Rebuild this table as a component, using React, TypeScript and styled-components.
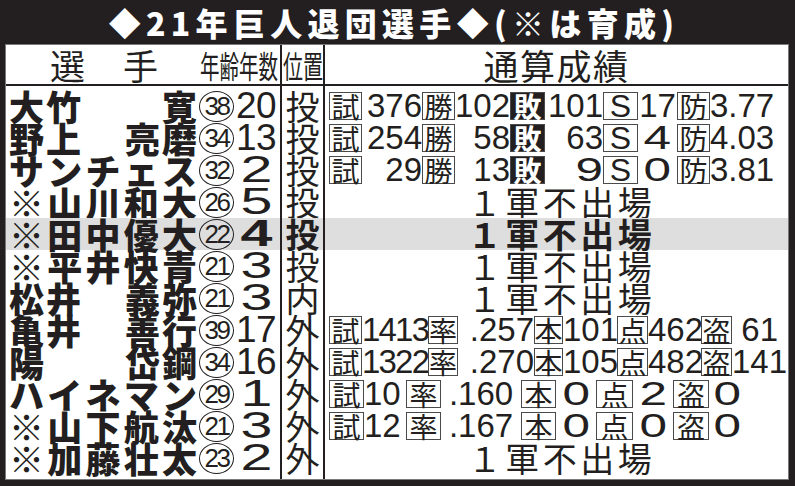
import styled, { createGlobalStyle } from 'styled-components';

const INK = '#231f20';
const JP = '"Noto Sans CJK JP", "Noto Sans", sans-serif';
const LATIN = '"Liberation Sans", Arial, "Noto Sans CJK JP", sans-serif';

const GlobalStyle = createGlobalStyle`
  html, body { margin: 0; padding: 0; background: ${INK}; }
  body { font-family: ${JP}; color: ${INK}; }
`;

type Align = 'left' | 'right' | 'center';

interface Stat {
  label: string;
  value: string;
  lw: number;
  vw: number;
  align: Align;
  dark: boolean;
}

interface Template {
  labels: string[];
  lw: number[];
  vw: number[];
  align: Align[];
}

// column widths measured off the printed table
const PITCH: Template = {
  labels: ['試', '勝', '敗', 'Ｓ', '防'],
  lw: [33, 33, 35, 35, 33],
  vw: [60, 55, 58, 39, 70],
  align: ['right', 'right', 'right', 'center', 'left'],
};
const BAT: Template = {
  labels: ['試', '率', '本', '点', '盗'],
  lw: [33, 30, 29, 31, 31],
  vw: [66, 76, 54, 53, 46],
  align: ['right', 'right', 'right', 'right', 'right'],
};
const BAT_FEW: Template = {
  labels: ['試', '率', '本', '点', '盗'],
  lw: [35, 35, 35, 37, 36],
  vw: [42, 80, 40, 40, 37],
  align: ['left', 'center', 'center', 'center', 'center'],
};

const build = (t: Template, values: string[]): Stat[] =>
  values.map((value, i) => ({
    label: t.labels[i],
    value,
    lw: t.lw[i],
    vw: t.vw[i],
    align: t.align[i],
    dark: t.labels[i] === '敗',
  }));

interface Player {
  family: string;
  given?: string;
  age: string;
  years: string;
  pos: string;
  stats?: Stat[];
  bold?: boolean;
}

const players: Player[] = [
  { family: '大竹', given: '寛', age: '38', years: '20', pos: '投', stats: build(PITCH, ['376', '102', '101', '17', '3.77']) },
  { family: '野上', given: '亮磨', age: '34', years: '13', pos: '投', stats: build(PITCH, ['254', '58', '63', '４', '4.03']) },
  { family: 'サンチェス', age: '32', years: '２', pos: '投', stats: build(PITCH, ['29', '13', '９', '０', '3.81']) },
  { family: '※山川和大', age: '26', years: '５', pos: '投' },
  { family: '※田中優大', age: '22', years: '４', pos: '投', bold: true },
  { family: '※平井快青', age: '21', years: '３', pos: '投' },
  { family: '松井', given: '義弥', age: '21', years: '３', pos: '内' },
  { family: '亀井', given: '善行', age: '39', years: '17', pos: '外', stats: build(BAT, ['1413', '.257', '101', '462', '61']) },
  { family: '陽', given: '岱鋼', age: '34', years: '16', pos: '外', stats: build(BAT, ['1322', '.270', '105', '482', '141']) },
  { family: 'ハイネマン', age: '29', years: '１', pos: '外', stats: build(BAT_FEW, ['10', '.160', '０', '２', '０']) },
  { family: '※山下航汰', age: '21', years: '３', pos: '外', stats: build(BAT_FEW, ['12', '.167', '０', '０', '０']) },
  { family: '※加藤壮太', age: '23', years: '２', pos: '外' },
];

const isWide = (s: string) => /^[０-９Ｓ]$/.test(s);
const toAscii = (s: string) => String.fromCharCode(s.charCodeAt(0) - 0xfee0);

function Num({ text, scale = 1.5 }: { text: string; scale?: number }) {
  if (isWide(text)) return <Wide $scale={scale}>{toAscii(text)}</Wide>;
  return <>{text}</>;
}

export default function App() {
  return (
    <Page>
      <GlobalStyle />
      <Title>◆21年巨人退団選手◆(※は育成)</Title>
      <Table>
        <HeaderRow>
          <HeadName>
            <HeadWord>選</HeadWord>
            <HeadWord $gap={38}>手</HeadWord>
            <Narrow $w={78} $scale={0.63} $push>
              <span>年齢年数</span>
            </Narrow>
          </HeadName>
          <HeadPos>
            <Narrow $w={40} $scale={0.645}>
              <span>位置</span>
            </Narrow>
          </HeadPos>
          <HeadStats>通算成績</HeadStats>
        </HeaderRow>
        <Body>
          {players.map((p) => (
            <Row key={p.family} $hl={!!p.bold}>
              <NameCell>
                <NameBox>
                  {p.given ? (
                    <>
                      <Part>{p.family}</Part>
                      <Part>{p.given}</Part>
                    </>
                  ) : (
                    [...p.family].map((ch, i) => <span key={i}>{ch}</span>)
                  )}
                </NameBox>
                <AgeSlot>
                  <Age>{p.age}</Age>
                </AgeSlot>
                <Years $bold={!!p.bold}>
                  <Num text={p.years} scale={1.55} />
                </Years>
              </NameCell>
              <PosCell $bold={!!p.bold}>{p.pos}</PosCell>
              <StatsCell>
                {p.stats ? (
                  p.stats.map((s) => (
                    <Stat key={s.label}>
                      <Tag $w={s.lw} $dark={s.dark} $latin={isWide(s.label)}>
                        {isWide(s.label) ? toAscii(s.label) : s.label}
                      </Tag>
                      <Val $w={s.vw} $align={s.align} $tight={/^\d{4}$/.test(s.value)}>
                        <Num text={s.value} />
                      </Val>
                    </Stat>
                  ))
                ) : (
                  <NoPlay $bold={!!p.bold}>１軍不出場</NoPlay>
                )}
              </StatsCell>
            </Row>
          ))}
        </Body>
      </Table>
    </Page>
  );
}

const Page = styled.div`
  width: 795px;
  height: 486px;
  box-sizing: border-box;
  padding: 0 6px 0 5px;
  background: ${INK};
  display: flex;
  flex-direction: column;
  overflow: hidden;
`;

const Title = styled.h1`
  margin: 0;
  height: 44px;
  display: flex;
  align-items: center;
  justify-content: center;
  padding-right: 6px;
  color: #fff;
  font-family: ${JP};
  font-size: 32px;
  font-weight: 900;
  letter-spacing: 5.3px;
  white-space: nowrap;
`;

const Table = styled.div`
  height: 436px;
  box-sizing: border-box;
  background: #fff;
  border: 1px solid #7a7a7a;
  display: flex;
  flex-direction: column;
`;

const HeaderRow = styled.div`
  display: grid;
  grid-template-columns: 276px 43px minmax(0, 1fr);
  height: 41px;
  box-sizing: border-box;
  border-bottom: 2px solid ${INK};
`;

const HeadName = styled.div`
  display: flex;
  align-items: center;
  padding-left: 44px;
  padding-right: 2px;
  border-right: 2px solid ${INK};
`;

const HeadWord = styled.span<{ $gap?: number }>`
  font-size: 35px;
  line-height: 1;
  margin-left: ${(p) => p.$gap ?? 0}px;
`;

const Narrow = styled.span<{ $w: number; $scale: number; $push?: boolean }>`
  display: inline-block;
  width: ${(p) => p.$w}px;
  margin-left: ${(p) => (p.$push ? 'auto' : '0')};
  white-space: nowrap;
  font-size: 31px;
  line-height: 1;

  span {
    display: inline-block;
    transform: scaleX(${(p) => p.$scale});
    transform-origin: left center;
  }
`;

const HeadPos = styled.div`
  display: flex;
  align-items: center;
  justify-content: center;
  border-right: 2px solid ${INK};
`;

const HeadStats = styled.div`
  display: flex;
  align-items: center;
  justify-content: center;
  font-size: 35px;
  letter-spacing: 1.5px;
  line-height: 1;
`;

const Body = styled.div`
  flex: 1;
  display: flex;
  flex-direction: column;
`;

const Row = styled.div<{ $hl: boolean }>`
  display: grid;
  grid-template-columns: 276px 43px minmax(0, 1fr);
  background: ${(p) => (p.$hl ? '#dedede' : 'transparent')};

  & > div {
    height: 32px;
    min-width: 0;
  }
  &:first-child > div {
    padding-top: 4px;
  }
  &:last-child > div {
    padding-bottom: 5px;
  }
`;

const NameCell = styled.div`
  display: grid;
  grid-template-columns: 187px 37px 44px;
  align-items: center;
  padding-left: 4px;
  border-right: 2px solid ${INK};
`;

const NameBox = styled.div`
  display: flex;
  justify-content: space-between;
  margin-left: -1px;
  font-size: 35px;
  font-weight: 900;
  line-height: 32px;
  white-space: nowrap;
`;

const Part = styled.span`
  letter-spacing: 2px;
  margin-right: -2px;
`;

const AgeSlot = styled.div`
  display: flex;
  justify-content: flex-end;
  align-items: center;
`;

// the circled age, drawn as a ring round the number
const Age = styled.span`
  display: flex;
  align-items: center;
  justify-content: center;
  width: 35px;
  min-width: 35px;
  height: 31px;
  box-sizing: border-box;
  border: 1.6px solid ${INK};
  border-radius: 50%;
  font-family: ${LATIN};
  font-size: 26px;
  letter-spacing: -2.5px;
  line-height: 1;
`;

const Years = styled.span<{ $bold: boolean }>`
  text-align: center;
  font-family: ${LATIN};
  font-size: 37px;
  font-weight: ${(p) => (p.$bold ? 700 : 400)};
  line-height: 32px;
  letter-spacing: -0.5px;
  white-space: nowrap;
`;

const Wide = styled.span<{ $scale: number }>`
  display: inline-block;
  font-family: ${LATIN};
  transform: scaleX(${(p) => p.$scale});
`;

const PosCell = styled.div<{ $bold: boolean }>`
  display: flex;
  align-items: center;
  justify-content: center;
  border-right: 2px solid ${INK};
  font-size: 34px;
  font-weight: ${(p) => (p.$bold ? 700 : 400)};
  line-height: 32px;
`;

const StatsCell = styled.div`
  display: flex;
  align-items: center;
  padding-left: 4px;
`;

const Stat = styled.span`
  display: flex;
  align-items: center;
  flex-shrink: 0;

  /* wide single digits keep room for their stretched glyph */
  span span {
    margin: 0 0.14em;
  }
`;

const Tag = styled.span<{ $w: number; $dark: boolean; $latin: boolean }>`
  display: inline-flex;
  align-items: center;
  justify-content: center;
  width: ${(p) => p.$w}px;
  height: 28px;
  box-sizing: border-box;
  border: 1px solid #4a4a4a;
  background: ${(p) => (p.$dark ? INK : '#fff')};
  color: ${(p) => (p.$dark ? '#fff' : INK)};
  font-family: ${(p) => (p.$latin ? LATIN : JP)};
  font-size: ${(p) => (p.$latin ? 32 : 28)}px;
  font-weight: ${(p) => (p.$dark ? 700 : 400)};
  line-height: 26px;
`;

const Val = styled.span<{ $w: number; $align: Align; $tight: boolean }>`
  display: inline-block;
  width: ${(p) => p.$w}px;
  text-align: ${(p) => p.$align};
  font-family: ${LATIN};
  font-size: 33px;
  letter-spacing: ${(p) => (p.$tight ? -1.8 : 0)}px;
  line-height: 32px;
  white-space: nowrap;
`;

const NoPlay = styled.span<{ $bold: boolean }>`
  flex: 1;
  padding-left: 6px;
  text-align: center;
  font-size: 34px;
  font-weight: ${(p) => (p.$bold ? 700 : 400)};
  letter-spacing: 3.5px;
  line-height: 32px;
`;
